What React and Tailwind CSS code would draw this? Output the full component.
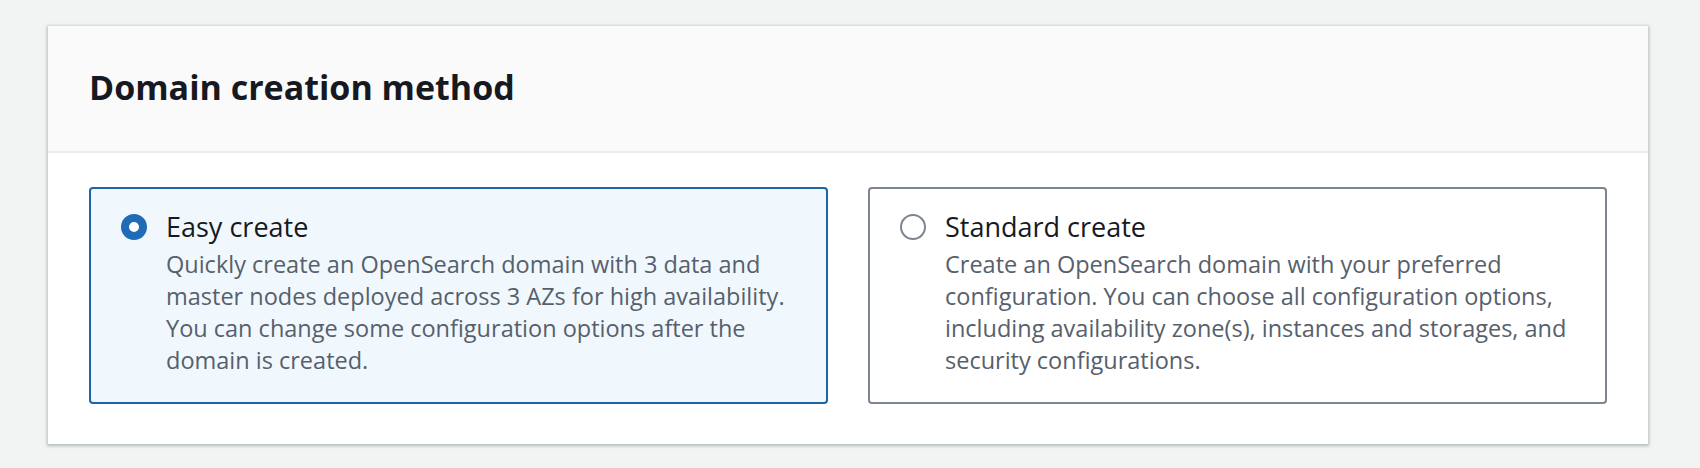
import React, { useState } from "react";

const options = [
    {
        id: "easy",
        label: "Easy create",
        description:
            "Quickly create an OpenSearch domain with 3 data and master nodes deployed across 3 AZs for high availability. You can change some configuration options after the domain is created.",
    },
    {
        id: "standard",
        label: "Standard create",
        description:
            "Create an OpenSearch domain with your preferred configuration. You can choose all configuration options, including availability zone(s), instances and storages, and security configurations.",
    },
];

const Tile = ({ option, selected, onSelect }) => {
    return (
        <label
            onClick={() => onSelect(option.id)}
            className={
                selected
                    ? "flex cursor-pointer rounded-[4px] border-2 border-[#1d64ab] bg-[#f1f8fd] pl-[30px] pr-[24px] pt-[19px] pb-[26px]"
                    : "flex cursor-pointer rounded-[4px] border-2 border-[#7d8590] bg-white pl-[30px] pr-[24px] pt-[19px] pb-[26px]"
            }
        >
            <div className="flex h-[38px] w-[26px] shrink-0 items-center">
                {selected ? (
                    <span className="block h-[26px] w-[26px] rounded-full border-[8px] border-[#1f6bb5] bg-white" />
                ) : (
                    <span className="block h-[26px] w-[26px] rounded-full border-2 border-[#7d8590] bg-white" />
                )}
            </div>
            <div className="ml-[19px] flex flex-col">
                <span className="text-[27px] leading-[38px] text-[#16191f]">{option.label}</span>
                <span className="mt-[2px] text-[23.5px] leading-[32px] text-[#56606c]">{option.description}</span>
            </div>
        </label>
    );
};

const App = () => {
    const [method, setMethod] = useState("easy");

    return (
        <div className="h-[468px] w-full bg-[#f2f3f3] pl-[48px] pt-[26px] font-['Open_Sans',sans-serif]">
            <div className="w-[1600px] bg-white shadow-[0_1px_3px_1px_rgba(0,28,36,0.25)]">
                <div className="flex h-[127px] items-center border-b-2 border-[#eaeded] bg-[#fafafa] px-[41px] pb-[4px]">
                    <h2 className="text-[34px] font-bold leading-[40px] text-[#16191f]">Domain creation method</h2>
                </div>
                <div className="grid grid-cols-2 gap-[40px] px-[41px] pt-[34px] pb-[40px]">
                    {options.map((o) => (
                        <Tile key={o.id} option={o} selected={method === o.id} onSelect={setMethod} />
                    ))}
                </div>
            </div>
        </div>
    );
};

export default App;
